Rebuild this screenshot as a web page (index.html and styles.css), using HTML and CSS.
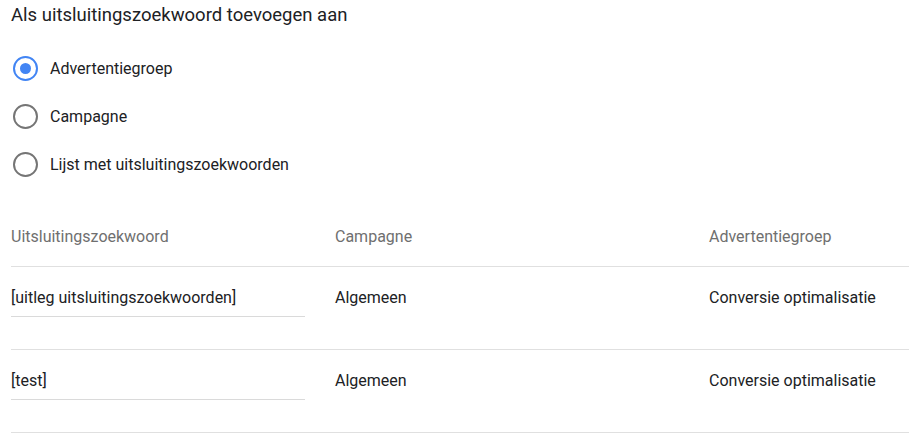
FILE: index.html
```html
<!DOCTYPE html>
<html lang="nl">
<head>
    <meta charset="UTF-8">
    <title>Uitsluitingszoekwoorden</title>
    <link rel="stylesheet" href="styles.css">
</head>
<body>
    <h2 class="titel">Als uitsluitingszoekwoord toevoegen aan</h2>

    <div class="keuzes">
        <label class="keuze">
            <span class="radio actief"></span>
            Advertentiegroep
        </label>
        <label class="keuze">
            <span class="radio"></span>
            Campagne
        </label>
        <label class="keuze">
            <span class="radio"></span>
            Lijst met uitsluitingszoekwoorden
        </label>
    </div>

    <div class="tabel">
        <div class="rij kop">
            <div class="kol-woord">Uitsluitingszoekwoord</div>
            <div class="kol-campagne">Campagne</div>
            <div class="kol-groep">Advertentiegroep</div>
        </div>
        <div class="rij">
            <div class="kol-woord"><div class="invoer">[uitleg uitsluitingszoekwoorden]</div></div>
            <div class="kol-campagne">Algemeen</div>
            <div class="kol-groep">Conversie optimalisatie</div>
        </div>
        <div class="rij">
            <div class="kol-woord"><div class="invoer">[test]</div></div>
            <div class="kol-campagne">Algemeen</div>
            <div class="kol-groep">Conversie optimalisatie</div>
        </div>
    </div>
</body>
</html>
```

FILE: styles.css
```css
html {
    background-color: #fff;
}

body {
    margin: 0;
    padding: 4px 0 0 11px;
    font-family: Roboto, "Liberation Sans", sans-serif;
    color: #202124;
}

.titel {
    margin: 0;
    font-size: 18.5px;
    font-weight: 400;
    line-height: 22px;
}

.keuzes {
    display: flex;
    flex-direction: column;
    gap: 24px;
    margin-top: 30px;
}

.keuze {
    display: flex;
    align-items: center;
    gap: 12px;
    font-size: 16px;
    height: 24px;
}

.radio {
    width: 21px;
    height: 21px;
    border: 2.5px solid #757575;
    border-radius: 50%;
    margin-left: 2px;
    display: flex;
    align-items: center;
    justify-content: center;
}

.radio.actief {
    border-color: #4285f4;
}

.radio.actief::after {
    content: "";
    width: 11px;
    height: 11px;
    border-radius: 50%;
    background-color: #4285f4;
}

.tabel {
    margin-top: 51px;
}

.rij {
    display: flex;
    height: 82px;
    border-bottom: 1px solid #e0e0e0;
    font-size: 16px;
}

.rij.kop {
    height: 39px;
    color: #6f6f6f;
}

.kol-woord {
    width: 324px;
}

.kol-campagne {
    width: 374px;
}

.kol-groep {
    flex: 1;
}

.rij > div {
    padding-top: 21px;
}

.rij.kop > div {
    padding-top: 0;
}

.invoer {
    width: 294px;
    padding-bottom: 9px;
    border-bottom: 1px solid #dadada;
}
```
